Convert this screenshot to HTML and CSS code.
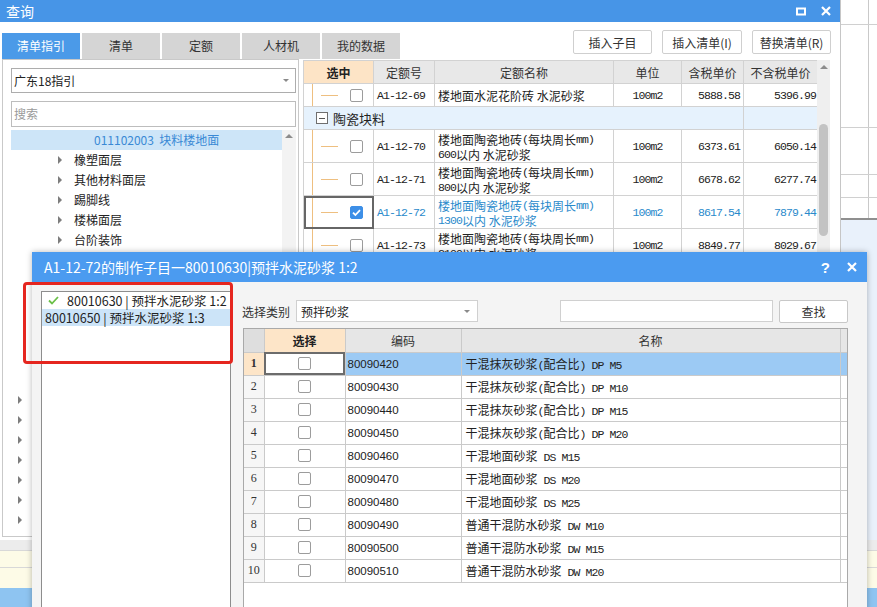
FILE: index.html
```html
<!DOCTYPE html>
<html lang="zh-CN">
<head>
<meta charset="utf-8">
<title>查询</title>
<link rel="stylesheet" href="styles.css">
</head>
<body>
<div class="screen">
  <div class="app">
    <div class="app-top">
      <div class="ar ar1"></div>
      <div class="ar ar2"></div>
      <div class="ar ar3"></div>
      <div class="ar ar4"></div>
      <div class="ar ar5"></div>
    </div>
    <div class="app-mid"></div>
    <div class="app-bottom">
      <div class="ab ab-gray"></div>
      <div class="ab ab-y1"></div>
      <div class="ab ab-y2"></div>
      <div class="ab ab-blue"></div>
    </div>
  </div>

  <section class="query">
    <header class="q-title">
      <span class="q-name">查询</span>
      <div class="q-ctrls">
        <svg width="10" height="9" viewBox="0 0 10 9"><rect x="1" y="1.5" width="8" height="6" fill="none" stroke="#fff" stroke-width="2"/></svg>
        <svg width="10" height="10" viewBox="0 0 10 10"><path d="M1 1L9 9M9 1L1 9" stroke="#fff" stroke-width="2.2"/></svg>
      </div>
    </header>
    <div class="q-body">
      <div class="q-toolbar">
        <nav class="tabs">
          <div class="tab active">清单指引</div>
          <div class="tab">清单</div>
          <div class="tab">定额</div>
          <div class="tab">人材机</div>
          <div class="tab">我的数据</div>
        </nav>
        <div class="q-buttons">
          <button class="btn">插入子目</button>
          <button class="btn">插入清单(I)</button>
          <button class="btn">替换清单(R)</button>
        </div>
      </div>
      <div class="q-content">
        <aside class="lpanel">
          <div class="combo"><span>广东18指引</span><i class="caret"></i></div>
          <div class="search">搜索</div>
          <div class="tree">
            <div class="tree-list">
              <div class="node sel">011102003&nbsp;&nbsp;块料楼地面</div>
              <div class="node child"><i class="tri"></i>橡塑面层</div>
              <div class="node child"><i class="tri"></i>其他材料面层</div>
              <div class="node child"><i class="tri"></i>踢脚线</div>
              <div class="node child"><i class="tri"></i>楼梯面层</div>
              <div class="node child"><i class="tri"></i>台阶装饰</div>
              <div class="tree-gap"></div>
              <div class="node top"><i class="tri"></i></div>
              <div class="node top"><i class="tri"></i></div>
              <div class="node top"><i class="tri"></i></div>
              <div class="node top"><i class="tri"></i></div>
              <div class="node top"><i class="tri"></i></div>
              <div class="node top"><i class="tri"></i></div>
              <div class="node top"><i class="tri"></i></div>
            </div>
            <div class="vscroll"><i class="up"></i></div>
          </div>
        </aside>
        <div class="rpanel">
          <div class="qt-wrap">
            <table class="qt">
              <colgroup><col class="c-sel"><col class="c-no"><col class="c-name"><col class="c-unit"><col class="c-p1"><col class="c-p2"></colgroup>
              <thead>
                <tr><th class="th-sel">选中</th><th>定额号</th><th>定额名称</th><th>单位</th><th>含税单价</th><th>不含税单价</th></tr>
              </thead>
              <tbody>
                <tr>
                  <td class="tsel"><div class="tc"><i class="hl"></i><i class="cb"></i></div></td>
                  <td class="m">A1-12-69</td>
                  <td class="nm">楼地面水泥花阶砖 水泥砂浆</td>
                  <td class="m ctr">100m2</td>
                  <td class="m rt">5888.58</td>
                  <td class="m rt">5396.99</td>
                </tr>
                <tr class="grp">
                  <td colspan="5"><div class="gc"><i class="minus"></i>陶瓷块料</div></td>
                  <td></td>
                </tr>
                <tr class="two">
                  <td class="tsel"><div class="tc"><i class="hl"></i><i class="cb"></i></div></td>
                  <td class="m">A1-12-70</td>
                  <td class="nm"><div class="l2"><div class="ln">楼地面陶瓷地砖<span class="mm">(</span>每块周长<span class="mm">mm)</span></div><div class="ln"><span class="mm">600</span>以内 水泥砂浆</div></div></td>
                  <td class="m ctr">100m2</td>
                  <td class="m rt">6373.61</td>
                  <td class="m rt">6050.14</td>
                </tr>
                <tr class="two">
                  <td class="tsel"><div class="tc"><i class="hl"></i><i class="cb"></i></div></td>
                  <td class="m">A1-12-71</td>
                  <td class="nm"><div class="l2"><div class="ln">楼地面陶瓷地砖<span class="mm">(</span>每块周长<span class="mm">mm)</span></div><div class="ln"><span class="mm">800</span>以内 水泥砂浆</div></div></td>
                  <td class="m ctr">100m2</td>
                  <td class="m rt">6678.62</td>
                  <td class="m rt">6277.74</td>
                </tr>
                <tr class="two cur">
                  <td class="tsel focus"><div class="tc"><i class="hl"></i><i class="cb on"><svg width="13" height="13" viewBox="0 0 13 13"><path d="M3 6.6L5.4 9L10 4.2" fill="none" stroke="#fff" stroke-width="1.8"/></svg></i></div></td>
                  <td class="m">A1-12-72</td>
                  <td class="nm"><div class="l2"><div class="ln">楼地面陶瓷地砖<span class="mm">(</span>每块周长<span class="mm">mm)</span></div><div class="ln"><span class="mm">1300</span>以内 水泥砂浆</div></div></td>
                  <td class="m ctr">100m2</td>
                  <td class="m rt">8617.54</td>
                  <td class="m rt">7879.44</td>
                </tr>
                <tr class="two">
                  <td class="tsel"><div class="tc"><i class="hl"></i><i class="cb"></i></div></td>
                  <td class="m">A1-12-73</td>
                  <td class="nm"><div class="l2"><div class="ln">楼地面陶瓷地砖<span class="mm">(</span>每块周长<span class="mm">mm)</span></div><div class="ln"><span class="mm">2100</span>以内 水泥砂浆</div></div></td>
                  <td class="m ctr">100m2</td>
                  <td class="m rt">8849.77</td>
                  <td class="m rt">8029.67</td>
                </tr>
              </tbody>
            </table>
          </div>
          <div class="qscroll"><i class="up"></i><div class="thumb"></div></div>
        </div>
      </div>
    </div>
  </section>

  <section class="dialog">
    <header class="d-title">
      <span class="d-name">A1-12-72的制作子目一80010630|预拌水泥砂浆 1:2</span>
      <div class="d-ctrls">
        <span class="help">?</span>
        <svg width="10" height="10" viewBox="0 0 10 10"><path d="M1 1L9 9M9 1L1 9" stroke="#fff" stroke-width="2.2"/></svg>
      </div>
    </header>
    <div class="d-body">
      <div class="d-list">
        <div class="li"><svg class="ok" width="11" height="9" viewBox="0 0 11 9"><path d="M1 4.5L4 7.5L10 1" fill="none" stroke="#6abf48" stroke-width="1.8"/></svg>80010630 | 预拌水泥砂浆 1:2</div>
        <div class="li sel">80010650 | 预拌水泥砂浆 1:3</div>
      </div>
      <div class="d-main">
        <div class="d-toolbar">
          <span class="lbl">选择类别</span>
          <div class="combo d-combo"><span>预拌砂浆</span><i class="caret"></i></div>
          <div class="d-search"></div>
          <button class="btn d-btn">查找</button>
        </div>
        <div class="grid">
          <table class="gt">
            <colgroup><col class="g-rn"><col class="g-sel"><col class="g-code"><col class="g-name"><col class="g-x"></colgroup>
            <thead>
              <tr><th class="rn"></th><th class="th-sel">选择</th><th>编码</th><th>名称</th><th></th></tr>
            </thead>
            <tbody>
              <tr class="cur"><td class="rn">1</td><td class="gsel focus"><i class="cb"></i></td><td class="code">80090420</td><td class="gname">干混抹灰砂浆<span class="mm">(</span>配合比<span class="mm">) DP M5</span></td><td></td></tr>
              <tr><td class="rn">2</td><td class="gsel"><i class="cb"></i></td><td class="code">80090430</td><td class="gname">干混抹灰砂浆<span class="mm">(</span>配合比<span class="mm">) DP M10</span></td><td></td></tr>
              <tr><td class="rn">3</td><td class="gsel"><i class="cb"></i></td><td class="code">80090440</td><td class="gname">干混抹灰砂浆<span class="mm">(</span>配合比<span class="mm">) DP M15</span></td><td></td></tr>
              <tr><td class="rn">4</td><td class="gsel"><i class="cb"></i></td><td class="code">80090450</td><td class="gname">干混抹灰砂浆<span class="mm">(</span>配合比<span class="mm">) DP M20</span></td><td></td></tr>
              <tr><td class="rn">5</td><td class="gsel"><i class="cb"></i></td><td class="code">80090460</td><td class="gname">干混地面砂浆<span class="mm"> DS M15</span></td><td></td></tr>
              <tr><td class="rn">6</td><td class="gsel"><i class="cb"></i></td><td class="code">80090470</td><td class="gname">干混地面砂浆<span class="mm"> DS M20</span></td><td></td></tr>
              <tr><td class="rn">7</td><td class="gsel"><i class="cb"></i></td><td class="code">80090480</td><td class="gname">干混地面砂浆<span class="mm"> DS M25</span></td><td></td></tr>
              <tr><td class="rn">8</td><td class="gsel"><i class="cb"></i></td><td class="code">80090490</td><td class="gname">普通干混防水砂浆<span class="mm"> DW M10</span></td><td></td></tr>
              <tr><td class="rn">9</td><td class="gsel"><i class="cb"></i></td><td class="code">80090500</td><td class="gname">普通干混防水砂浆<span class="mm"> DW M15</span></td><td></td></tr>
              <tr><td class="rn">10</td><td class="gsel"><i class="cb"></i></td><td class="code">80090510</td><td class="gname">普通干混防水砂浆<span class="mm"> DW M20</span></td><td></td></tr>
            </tbody>
          </table>
        </div>
      </div>
    </div>
  </section>

  <div class="annot"></div>
</div>
</body>
</html>
```

FILE: styles.css
```css
* { box-sizing: border-box; margin: 0; padding: 0; }
html, body { margin: 0; background: #fff; }
body {
  font-family: "Noto Sans CJK SC", "Noto Sans", sans-serif;
  font-size: 12px;
  color: #333;
}
.screen { position: relative; width: 877px; height: 607px; overflow: hidden; background: #fff; }

/* ---------- background application ---------- */
.app { display: flex; flex-direction: column; height: 607px; }
.app-top {
  background: linear-gradient(to right, transparent 868px, #c9c9c9 868px, #c9c9c9 869px, transparent 869px), #fff;
}
.ar { border-bottom: 1px solid #d0d0d0; }
.ar1 { height: 25px; }
.ar2 { height: 103px; }
.ar3 { height: 47px; }
.ar4 { height: 23px; }
.ar5 { height: 22px; border-bottom: 2px solid #8f8f8f; }
.app-mid { flex: 1; background: #e9f1fb; }
.ab { border-bottom: 1px solid #d8d8d8; }
.ab-gray { height: 11px; background: #ececec; }
.ab-y1 { height: 17px; background: #fdfbe7; }
.ab-y2 { height: 20px; background: #fdfbe7; border-bottom: none; }
.ab-blue { height: 19px; background: #8ec4f1; border-bottom: none; }

/* ---------- query window ---------- */
.query {
  position: absolute; left: 0; top: 0;
  width: 841px; height: 540px;
  background: #fff;
  border-right: 1px solid #c6c6c6;
  display: flex; flex-direction: column;
}
.q-title {
  flex: none;
  height: 22px; background: #4795e7; color: #fff;
  display: flex; align-items: center; justify-content: space-between;
  padding: 0 9px 0 6px;
}
.q-name { font-size: 14px; line-height: 22px; }
.q-ctrls { display: flex; align-items: center; gap: 15px; }
.q-body { flex: 1; display: flex; flex-direction: column; min-height: 0; }
.q-toolbar { flex: none; height: 37px; display: flex; justify-content: space-between; padding: 0 9px 0 2px; }
.tabs { display: flex; gap: 2px; align-self: flex-end; }
.tab {
  width: 78px; height: 26px; background: #d5d5d5; color: #333;
  text-align: center; line-height: 26px; font-size: 12px;
}
.tab.active { background: #4b9ae8; color: #fff; }
.q-buttons { display: flex; gap: 10px; padding-top: 8px; }
.btn {
  font-family: inherit; font-size: 12px; color: #333;
  background: #fff; border: 1px solid #cfcfcf; border-radius: 2px;
  height: 24px; width: 79px;
}
.q-buttons .btn:nth-child(2) { width: 80px; }

.q-content { flex: 1; display: flex; align-items: flex-start; min-height: 0; }
.lpanel {
  flex: none;
  margin-left: 2px; width: 297px; height: 478px;
  border: 1px solid #c9c9c9;
  padding: 8px 2px 0 8px;
  display: flex; flex-direction: column;
}
.combo {
  flex: none;
  height: 25px; border: 1px solid #adadad; background: #fff;
  display: flex; align-items: center; justify-content: space-between;
  padding: 0 6px 0 2px; font-size: 12px; color: #222;
}
.caret { width: 0; height: 0; border-left: 3px solid transparent; border-right: 3px solid transparent; border-top: 3px solid #8a8a8a; }
.search {
  flex: none;
  margin-top: 8px; height: 26px; border: 1px solid #bdbdbd;
  padding-left: 2px; line-height: 24px; color: #9a9a9a;
}
.tree { margin-top: 3px; flex: 1; display: flex; overflow: hidden; min-height: 0; }
.tree-list { width: 271px; }
.tree-gap { height: 140px; }
.vscroll { width: 14px; background: #f3f3f3; }
.vscroll .up, .qscroll .up {
  display: block; width: 0; height: 0; margin: 4px auto 0;
  border-left: 4px solid transparent; border-right: 4px solid transparent; border-bottom: 4px solid #8c8c8c;
}
.node { height: 20px; line-height: 20px; white-space: nowrap; display: flex; align-items: center; color: #222; }
.node.sel { background: #cde5f8; color: #3a89d5; padding-left: 83px; }
.tri {
  width: 0; height: 0; border-top: 4px solid transparent; border-bottom: 4px solid transparent;
  border-left: 4px solid #7d7d7d; margin-right: 12px;
}
.node.child .tri { margin-left: 47px; }
.node.top .tri { margin-left: 7px; }

.rpanel { flex: none; margin-left: 4px; margin-top: 1px; display: flex; height: 480px; }
.qt-wrap { width: 514px; overflow: hidden; }
.qscroll { width: 13px; background: #efefef; position: relative; }
.qscroll .up { margin-top: 5px; }
.qscroll .thumb {
  position: absolute; left: 2px; top: 64px; width: 9px; height: 112px;
  background: #c3c3c3; border-radius: 5px;
}

/* top table */
.qt { border-collapse: collapse; table-layout: fixed; width: 514px; }
.c-sel { width: 70px; } .c-no { width: 61px; } .c-name { width: 179px; }
.c-unit { width: 68px; } .c-p1 { width: 62px; } .c-p2 { width: 74px; }
.qt th, .qt td { border: 1px solid #d2d2d2; white-space: nowrap; overflow: hidden; padding: 0 3px; }
.qt th { height: 23px; background: #e8e8e8; font-weight: normal; color: #333; font-size: 12px; }
.qt th.th-sel { background: #fde4c6; font-weight: bold; color: #222; }
.qt td { height: 23px; background: #fff; color: #222; line-height: 15px; }
.qt tr.two td { height: 33px; }
.qt td.tsel { padding: 0; }
.tc {
  height: 22px; display: flex; align-items: center;
  margin-left: 8px; border-left: 1px solid #eebf80;
}
.qt tr.two .tc { height: 32px; }
.hl { width: 17px; height: 1px; background: #eebf80; margin-left: 8px; }
.cb {
  display: block; width: 13px; height: 13px; border: 1px solid #9c9c9c; border-radius: 2px;
  background: #fff; margin-left: 12px;
}
.cb.on { background: #3d8fe7; border-color: #3d8fe7; }
.cb.on svg { display: block; margin: -1px 0 0 -1px; }
.m, .mm { font-family: "Liberation Mono", "Noto Sans CJK SC", monospace; font-size: 11.5px; letter-spacing: -0.9px; }
.l2 { height: 32px; padding-top: 2px; overflow: hidden; }
.ln { height: 15px; line-height: 15px; overflow: hidden; }
.ln .mm { line-height: 15px; vertical-align: top; }
.ctr { text-align: center; }
.rt { text-align: right; }
.qt td.rt:last-child { padding-right: 1px; }
.qt tr.cur td { color: #2a8acb; }
.qt td.focus { outline: 2px solid #666; outline-offset: -2px; }
.qt tr.grp td { background: #e6f2fd; padding: 0; }
.gc { display: flex; align-items: center; height: 22px; font-size: 13px; color: #222; }
.minus {
  width: 12px; height: 12px; border: 1px solid #6f6f6f; margin: 0 5px 0 12px;
  display: block;
  background: linear-gradient(#555, #555) no-repeat center / 6px 1px, #fff;
}

/* ---------- dialog ---------- */
.dialog {
  position: absolute; left: 32px; top: 252px;
  width: 835px; height: 370px;
  background: #f4f4f4;
  box-shadow: 0 0 6px rgba(0,0,0,0.28);
  display: flex; flex-direction: column;
}
.d-title {
  flex: none;
  height: 30px; background: #4b9bf0; color: #fff;
  display: flex; align-items: center; justify-content: space-between;
  padding: 0 10px 0 12px;
}
.d-name { font-size: 14px; }
.d-ctrls { display: flex; align-items: center; gap: 17px; }
.help { font-family: "Liberation Sans", sans-serif; font-weight: bold; font-size: 15px; }
.d-body { flex: 1; display: flex; padding: 9px 0 0 9px; min-height: 0; }
.d-list { flex: none; width: 190px; background: #fff; border: 1px solid #8d8d8d; border-bottom: none; }
.li { height: 17px; line-height: 17px; display: flex; align-items: center; padding-left: 3px; color: #222; white-space: nowrap; font-size: 12.5px; }
.li:first-child { padding-left: 6px; }
.ok { margin-right: 8px; }
.li.sel { background: #cce4f8; }
.d-main { flex: none; margin-left: 11px; width: 606px; padding-top: 9px; }
.d-toolbar { height: 22px; display: flex; align-items: center; }
.lbl { width: 54px; color: #333; }
.d-combo { width: 182px; height: 22px; border-color: #d0d0d0; padding-left: 4px; }
.d-combo .caret { margin-right: 1px; }
.d-search { margin-left: auto; width: 213px; height: 22px; border: 1px solid #d0d0d0; background: #fff; }
.d-btn { margin-left: 6px; width: 69px; height: 23px; border-color: #c8c8c8; }
.grid {
  margin: 6px 0 0 1px; width: 605px; height: 300px;
  border: 1px solid #a9a9a9; background: #fff;
}
.gt { border-collapse: collapse; table-layout: fixed; width: 603px; }
.g-rn { width: 20px; } .g-sel { width: 81px; } .g-code { width: 116px; } .g-name { width: 379px; } .g-x { width: 7px; }
.gt th, .gt td { border: 1px solid #cacaca; height: 23px; padding: 0; white-space: nowrap; overflow: hidden; }
.gt tr > :first-child { border-left: none; }
.gt tr > :last-child { border-right: none; }
.gt thead th { border-top: none; background: #e6e6e6; font-weight: normal; color: #333; }
.gt th.th-sel { background: #fde5c8; font-weight: bold; color: #222; }
.gt th.rn { background: #dedede; }
.gt td.rn { background: #f6f6f6; text-align: center; font-family: "Liberation Serif", serif; font-size: 12px; color: #333; }
.gt tr.cur td { background: #9ccaf4; }
.gt tr.cur td.rn { background: #fde5c8; font-weight: bold; }
.gt tr.cur td.gsel { background: #fff; outline: 2px solid #6c6c6c; outline-offset: -2px; }
.gsel .cb { margin: 0 auto; }
.code { padding-left: 2px !important; font-family: "Liberation Sans", sans-serif; font-size: 11.5px; color: #222; }
.gname { padding-left: 4px !important; color: #222; }

/* ---------- annotation ---------- */
.annot {
  position: absolute; left: 23px; top: 282px; width: 210px; height: 82px;
  border: 3px solid #e5261f; border-radius: 4px;
}
```
